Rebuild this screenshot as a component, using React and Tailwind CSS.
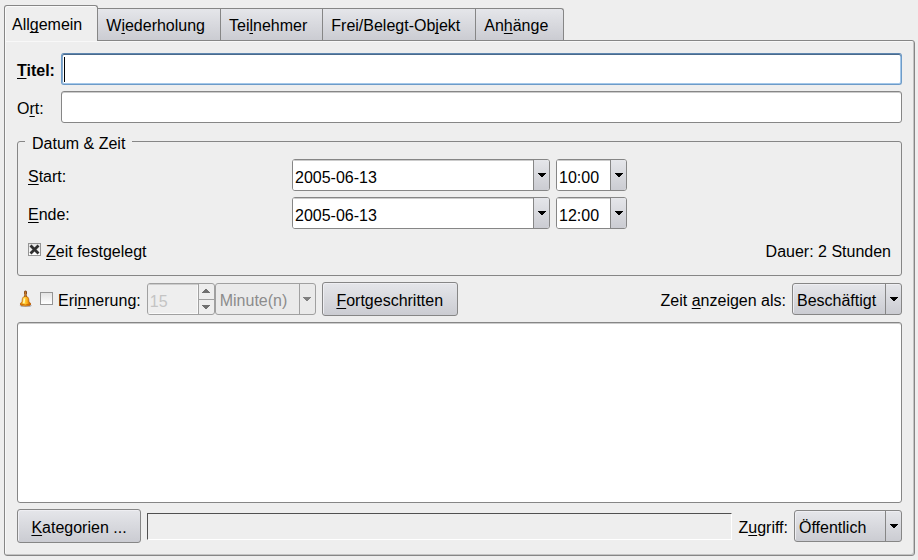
import React from "react";

const FACE = "bg-linear-to-b from-[#e5e6ea] to-[#cbccd2]";
const FRAME = "rounded-[3px] border border-[#868686]";

function Key({ children }) {
  return (
    <u className="decoration-1 underline-offset-2 [text-decoration-skip-ink:none]">{children}</u>
  );
}

function Arrow({ up, className = "" }) {
  return (
    <svg
      viewBox="0 0 8 4"
      className={`h-1 w-2 ${up ? "rotate-180" : ""} ${className}`}
      shapeRendering="crispEdges"
      aria-hidden="true"
    >
      <path d="M0 0h8v1h-1v1h-1v1h-1v1h-2v-1h-1v-1h-1v-1h-1z" fill="currentColor" />
    </svg>
  );
}

function Tab({ active, children }) {
  return (
    <button
      type="button"
      role="tab"
      aria-selected={active ? "true" : "false"}
      className={
        active
          ? "relative -mb-px h-9 rounded-t-[3px] border border-b-0 border-[#868686] bg-[#eeeeee] pt-1 pr-[15px] pb-px pl-[7px] whitespace-nowrap shadow-[inset_1px_1px_0_#fafafa]"
          : `h-8 border-t border-r border-[#868686] pt-[3px] pr-[15px] pl-2 whitespace-nowrap last:rounded-tr-[3px] ${FACE}`
      }
    >
      {children}
    </button>
  );
}

function EditCombo({ id, label, value }) {
  return (
    <div className={`flex h-8 overflow-hidden bg-white ${FRAME}`}>
      <input
        id={id}
        aria-label={label}
        defaultValue={value}
        className="min-w-0 flex-1 bg-white pt-1.5 pl-0.5 shadow-[inset_0_1px_0_#cccccc] outline-none"
      />
      <button
        type="button"
        aria-label={`${label} auswählen`}
        className={`flex w-4 items-center justify-center border-l border-[#868686] ${FACE}`}
      >
        <Arrow />
      </button>
    </div>
  );
}

function Choice({ id, label, options, disabled, className }) {
  return (
    <div className={`relative h-8 ${className}`}>
      <select
        id={id}
        aria-label={label}
        disabled={disabled}
        className={`h-full w-full appearance-none pt-1 pl-1 opacity-100 outline-none ${
          disabled
            ? "rounded-[3px] border border-[#a0a0a0] bg-[#eaeaea] text-[#8c8c8c]"
            : `${FRAME} ${FACE} text-black shadow-[inset_1px_1px_0_#eeeef2]`
        }`}
      >
        {options.map((o) => (
          <option key={o}>{o}</option>
        ))}
      </select>
      <span
        className={`pointer-events-none absolute inset-y-px right-px flex w-4 items-center justify-center border-l ${
          disabled ? "border-[#a0a0a0] text-[#808080]" : "border-[#868686]"
        }`}
      >
        <Arrow />
      </span>
    </div>
  );
}

function PushButton({ className, children }) {
  return (
    <button
      type="button"
      className={`h-[34px] shrink-0 pt-1 whitespace-nowrap shadow-[inset_1px_1px_0_#eeeef2] ${FRAME} ${FACE} ${className}`}
    >
      {children}
    </button>
  );
}

function Bell() {
  return (
    <svg viewBox="0 0 16 18" className="h-[18px] w-4 shrink-0" aria-hidden="true">
      <defs>
        <linearGradient id="brass" x1="0" x2="1">
          <stop offset="0" stopColor="#d96c00" />
          <stop offset="0.35" stopColor="#ffe052" />
          <stop offset="0.65" stopColor="#ffae14" />
          <stop offset="1" stopColor="#a84a00" />
        </linearGradient>
      </defs>
      <path d="M2.500 15.500l2-1h8.500l2 1-2 1.500h-8.500z" fill="#8c8c98" opacity="0.600" />
      <path d="M7.200 1.200q1.300-1.200 2.600 0l.2 2-.5 1.500.7 2.800h-3.400l.7-2.800-.5-1.500z" fill="#7a3c10" />
      <path d="M8.300 1.500v5.500" stroke="#dd8a2c" strokeWidth="1" />
      <path
        d="M6.200 7q2.300-1.200 4.600 0 1.200 1.200 1.200 4.500l1.900 2.500q.3 1.800-5.400 2-5.700-.2-5.400-2l1.900-2.500q0-3.300 1.200-4.500z"
        fill="url(#brass)"
        stroke="#b45800"
        strokeWidth="0.600"
      />
      <path d="M3.500 14q5 2 10 0" stroke="#d06a00" strokeWidth="1" fill="none" />
      <path d="M7.500 8.500l-.7 4.500" stroke="#fff6b8" strokeWidth="1.500" />
    </svg>
  );
}

function TickBox({ id, checked }) {
  return (
    <span className="relative flex size-[13px] shrink-0">
      <input
        id={id}
        type="checkbox"
        defaultChecked={checked}
        className="peer size-[13px] appearance-none border border-[#949494] bg-linear-to-b from-[#e4e4e4] to-white"
      />
      <svg
        viewBox="0 0 13 13"
        className="pointer-events-none absolute inset-0 hidden size-[13px] peer-checked:block"
        aria-hidden="true"
      >
        <path d="M2.500 2.500l8 8M10.500 2.500l-8 8" stroke="#303030" strokeWidth="2.800" />
      </svg>
    </span>
  );
}

export default function App() {
  return (
    <div className="flex min-h-screen flex-col bg-[#eeeeee] pt-[5px] pr-[3px] pb-1 pl-1 font-['Liberation_Sans',Arial,sans-serif] text-[16px] leading-6 text-black">
      <div role="tablist" className="flex items-end">
        <Tab active>
          All<Key>g</Key>emein
        </Tab>
        <Tab>
          W<Key>i</Key>ederholung
        </Tab>
        <Tab>
          Tei<Key>l</Key>nehmer
        </Tab>
        <Tab>
          Frei/Belegt-Ob<Key>j</Key>ekt
        </Tab>
        <Tab>
          An<Key>h</Key>änge
        </Tab>
      </div>

      <form className="flex flex-1 flex-col gap-1.5 rounded-[3px] rounded-tl-none border border-[#868686] p-3 shadow-[inset_-1px_-1px_0_#c4c4c4,inset_1px_1px_0_#f8f8f8]">
        <div className="grid grid-cols-[auto_1fr] items-center gap-1.5">
          <label htmlFor="titel" className="pt-1 font-bold">
            <Key>T</Key>itel:
          </label>
          <div className="relative">
            <input
              id="titel"
              className="block h-8 w-full rounded-[3px] border border-[#6d9bc8] border-t-[#5f87b0] bg-white pl-1 caret-transparent shadow-[inset_0_1px_0_#4a6a8c,inset_0_-1px_0_#a4c8ea,inset_-1px_0_0_#a4c8ea,inset_1px_0_0_#86a8c8] outline-none"
            />
            <span className="pointer-events-none absolute top-1 left-[3px] h-[25px] w-px bg-black" />
          </div>
          <label htmlFor="ort" className="pt-1">
            O<Key>r</Key>t:
          </label>
          <input
            id="ort"
            className={`block h-8 w-full bg-white pl-1 shadow-[inset_0_1px_0_#cccccc] outline-none ${FRAME}`}
          />
        </div>

        <fieldset className={`min-w-0 px-2.5 pt-1.5 pb-2 ${FRAME}`}>
          <legend className="-ml-[3px] h-6 px-[7px] pt-[3px]">Datum &amp; Zeit</legend>
          <div className="grid grid-cols-[1fr_258px_71px_1fr] items-center gap-1.5">
            <label htmlFor="start" className="pt-1">
              <Key>S</Key>tart:
            </label>
            <EditCombo id="start" label="Startdatum" value="2005-06-13" />
            <EditCombo id="startzeit" label="Startzeit" value="10:00" />
            <span />
            <label htmlFor="ende" className="pt-1">
              <Key>E</Key>nde:
            </label>
            <EditCombo id="ende" label="Enddatum" value="2005-06-13" />
            <EditCombo id="endzeit" label="Endzeit" value="12:00" />
            <span />
          </div>
          <div className="mt-1.5 flex h-8 items-center justify-between">
            <div className="flex items-center gap-[5px]">
              <span className="pb-1">
                <TickBox id="festgelegt" checked />
              </span>
              <label htmlFor="festgelegt" className="pt-0.5">
                <Key>Z</Key>eit festgelegt
              </label>
            </div>
            <span className="pt-0.5">Dauer: 2 Stunden</span>
          </div>
        </fieldset>

        <div className="flex items-center">
          <Bell />
          <span className="mr-[5px] ml-[7px] pb-0.5">
            <TickBox id="erinnerung" />
          </span>
          <label htmlFor="erinnerung" className="mr-1.5 pt-1">
            Eri<Key>n</Key>nerung:
          </label>
          <div className="flex h-8 w-[68px] overflow-hidden rounded-[3px] border border-[#a0a0a0] bg-[#eeeeee]">
            <input
              aria-label="Erinnerungszeit"
              disabled
              defaultValue="15"
              className="min-w-0 flex-1 pt-1.5 pl-0.5 text-[#c4c4c4] shadow-[inset_0_1px_0_#cccccc,inset_-1px_-1px_0_#fafafa]"
            />
            <div className="flex w-4 flex-col border-l border-[#a0a0a0] text-[#707070]">
              <button
                type="button"
                disabled
                aria-label="Mehr"
                className="flex flex-1 items-center justify-center border-b border-[#a0a0a0]"
              >
                <Arrow up />
              </button>
              <button
                type="button"
                disabled
                aria-label="Weniger"
                className="flex flex-1 items-center justify-center"
              >
                <Arrow />
              </button>
            </div>
          </div>
          <Choice
            id="einheit"
            label="Einheit"
            disabled
            options={["Minute(n)"]}
            className="mr-1.5 w-[101px]"
          />
          <PushButton className="w-[136px]">
            <Key>F</Key>ortgeschritten
          </PushButton>
          <label htmlFor="anzeigen" className="mr-1.5 ml-auto pt-1">
            Zeit <Key>a</Key>nzeigen als:
          </label>
          <Choice id="anzeigen" options={["Beschäftigt"]} className="w-[110px]" />
        </div>

        <textarea
          aria-label="Beschreibung"
          className={`block min-h-24 w-full flex-1 resize-none bg-white p-1 shadow-[inset_0_1px_0_#cccccc] outline-none ${FRAME}`}
        />

        <div className="flex items-center gap-1.5">
          <PushButton className="w-[124px]">
            <Key>K</Key>ategorien ...
          </PushButton>
          <output
            aria-label="Kategorien"
            className="h-[27px] flex-1 border border-t-[#505050] border-r-white border-b-white border-l-[#505050]"
          />
          <label htmlFor="zugriff" className="pt-1">
            Z<Key>u</Key>griff:
          </label>
          <Choice id="zugriff" options={["Öffentlich"]} className="w-[108px]" />
        </div>
      </form>
    </div>
  );
}
